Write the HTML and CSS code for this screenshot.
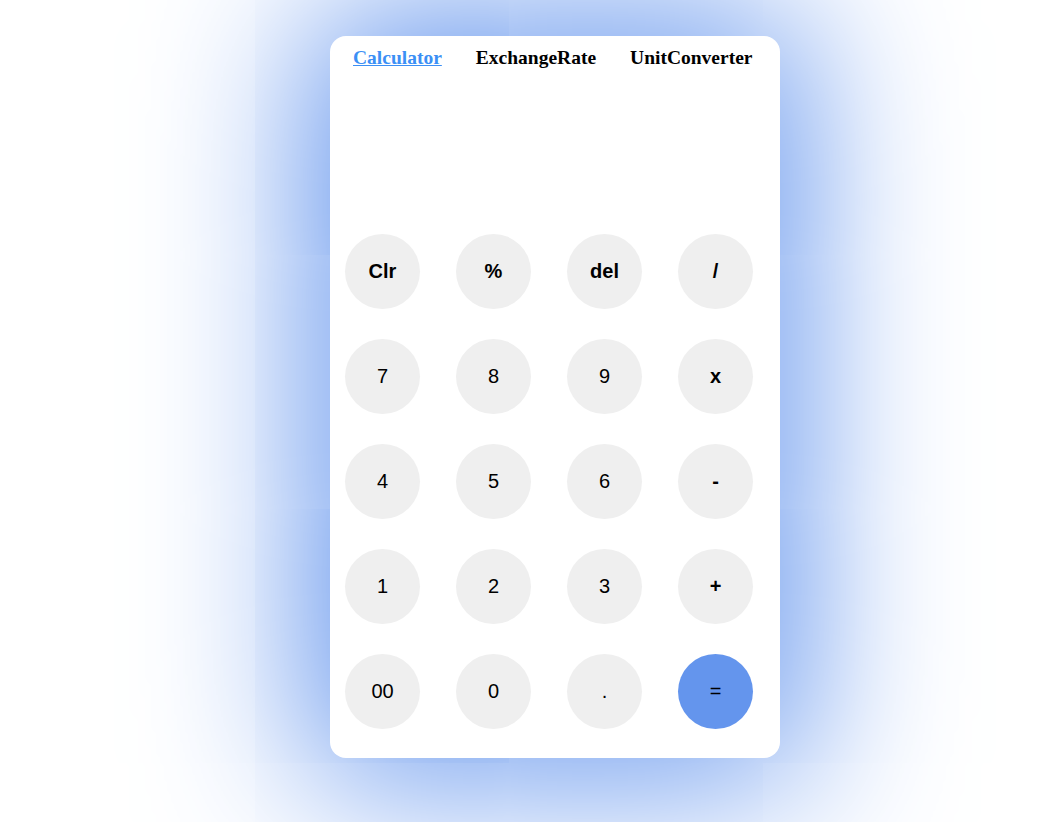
FILE: index.html
```html
<!DOCTYPE html>
<html lang="en">
<head>
  <meta charset="UTF-8">
  <meta name="viewport" content="width=device-width, initial-scale=1.0">
  <title>Calculator</title>
  <link rel="stylesheet" href="styles.css">
</head>
<body>
  <div class="calculator">
    <!-- Top navigation -->
    <nav class="nav">
      <a href="#" class="active">Calculator</a>
      <a href="#">ExchangeRate</a>
      <a href="#">UnitConverter</a>
    </nav>

    <div class="display" id="display"></div>

    <div class="keys">
      <button class="op">Clr</button>
      <button class="op">%</button>
      <button class="op">del</button>
      <button class="op">/</button>
      <button>7</button>
      <button>8</button>
      <button>9</button>
      <button class="op">x</button>
      <button>4</button>
      <button>5</button>
      <button>6</button>
      <button class="op">-</button>
      <button>1</button>
      <button>2</button>
      <button>3</button>
      <button class="op">+</button>
      <button>00</button>
      <button>0</button>
      <button>.</button>
      <button class="equal">=</button>
    </div>
  </div>
</body>
</html>
```

FILE: styles.css
```css
body {
  margin: 0;
  background-color: #fff;
  font-family: "Liberation Serif", "Times New Roman", serif;
  height: 822px;
  overflow: hidden;
}
.calculator {
  width: 450px;
  height: 722px;
  margin: 36px 0 0 330px;
  background-color: #fff;
  border-radius: 16px;
  box-shadow: 0 0 160px 25px #6495ed;
  display: flex;
  flex-direction: column;
  box-sizing: border-box;
}
.nav {
  display: flex;
  gap: 34px;
  padding: 11px 0 0 23px;
  font-size: 19.5px;
  font-weight: bold;
}
.nav a {
  color: #000;
  text-decoration: none;
}
.nav a.active {
  color: #3b8ff5;
  text-decoration: underline;
}
.display {
  flex: 1;
}
.keys {
  display: grid;
  grid-template-columns: repeat(4, 75px);
  column-gap: 36px;
  row-gap: 30px;
  padding: 0 0 29px 15px;
}
.keys button {
  width: 75px;
  height: 75px;
  border: none;
  border-radius: 50%;
  background-color: #efefef;
  font-family: "Liberation Sans", Arial, sans-serif;
  font-size: 20px;
  color: #000;
  cursor: pointer;
  padding: 0;
}
.keys button.op {
  font-weight: bold;
}
.keys button.equal {
  background-color: #6495ed;
}
```
